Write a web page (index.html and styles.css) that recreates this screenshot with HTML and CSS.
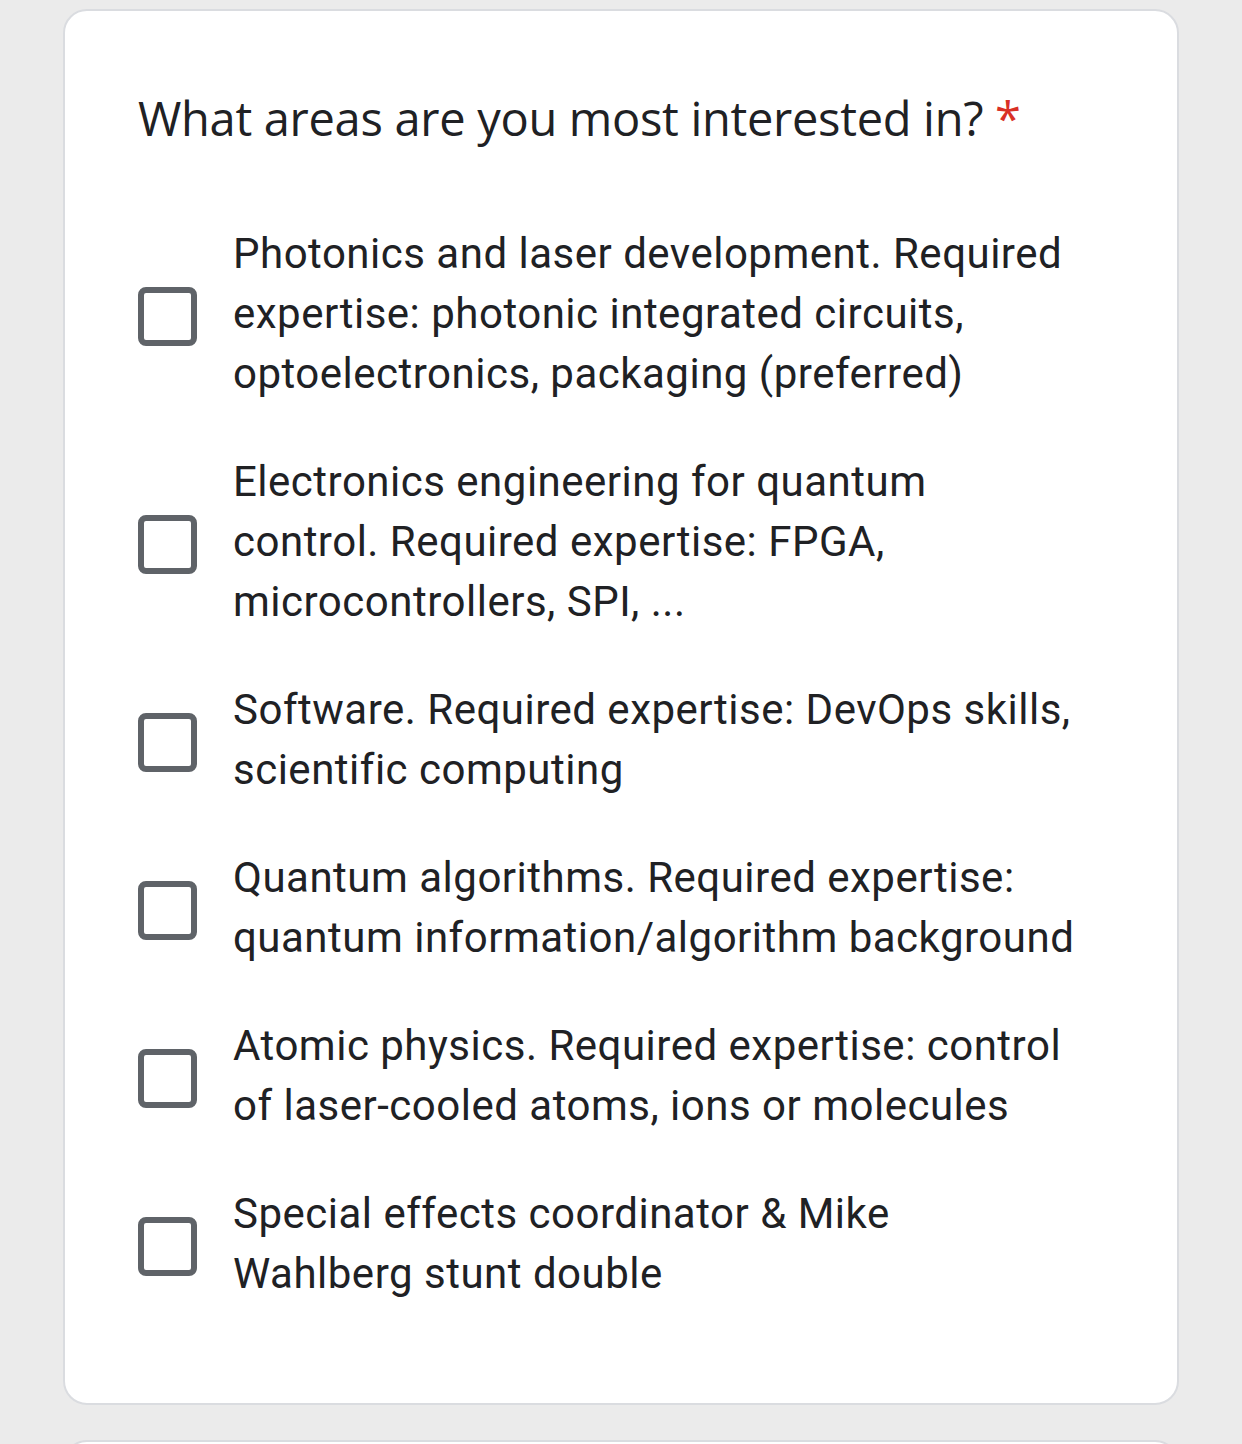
FILE: index.html
```html
<!DOCTYPE html>
<html>
<head>
<meta charset="utf-8">
<link rel="stylesheet" href="styles.css">
</head>
<body>
<div class="page">
  <div class="card">
    <div class="title">What areas are you most interested in? <span class="req">*</span></div>
    <div class="options">
      <label class="option"><span class="box"></span><span class="text">Photonics and laser development. Required expertise: photonic integrated circuits, optoelectronics, packaging (preferred)</span></label>
      <label class="option"><span class="box"></span><span class="text">Electronics engineering for quantum control. Required expertise: FPGA, microcontrollers, SPI, ...</span></label>
      <label class="option"><span class="box"></span><span class="text">Software. Required expertise: DevOps skills, scientific computing</span></label>
      <label class="option"><span class="box"></span><span class="text">Quantum algorithms. Required expertise: quantum information/algorithm background</span></label>
      <label class="option"><span class="box"></span><span class="text">Atomic physics. Required expertise: control of laser-cooled atoms, ions or molecules</span></label>
      <label class="option"><span class="box"></span><span class="text">Special effects coordinator &amp; Mike Wahlberg stunt double</span></label>
    </div>
  </div>
  <div class="card next"></div>
</div>
</body>
</html>
```

FILE: styles.css
```css
html, body {
  margin: 0;
  padding: 0;
  background: #ebebeb;
}
.page {
  padding: 9px 0 0 63px;
  height: 1444px;
  box-sizing: border-box;
  overflow: hidden;
}
.card {
  width: 1116px;
  box-sizing: border-box;
  background: #fff;
  border: 2px solid #dadce0;
  border-radius: 24px;
  padding: 77px 60px 75px 73px;
}
.card.next {
  margin-top: 35px;
  height: 100px;
  padding: 0;
}
.title {
  font-family: "Open Sans", Roboto, sans-serif;
  font-size: 47px;
  line-height: 60px;
  color: #202124;
  margin-bottom: 52px;
  letter-spacing: -0.3px;
}
.req {
  color: #d93025;
}
.option {
  display: flex;
  align-items: center;
  padding: 24px 0;
}
.box {
  flex: none;
  width: 47px;
  height: 47px;
  border: 6px solid #5f6368;
  border-radius: 8px;
  margin-right: 36px;
  margin-top: 5px;
}
.text {
  max-width: 846px;
  font-family: Roboto, "Noto Sans", sans-serif;
  font-size: 42px;
  line-height: 60px;
  color: #202124;
  letter-spacing: 0.5px;
}
```
